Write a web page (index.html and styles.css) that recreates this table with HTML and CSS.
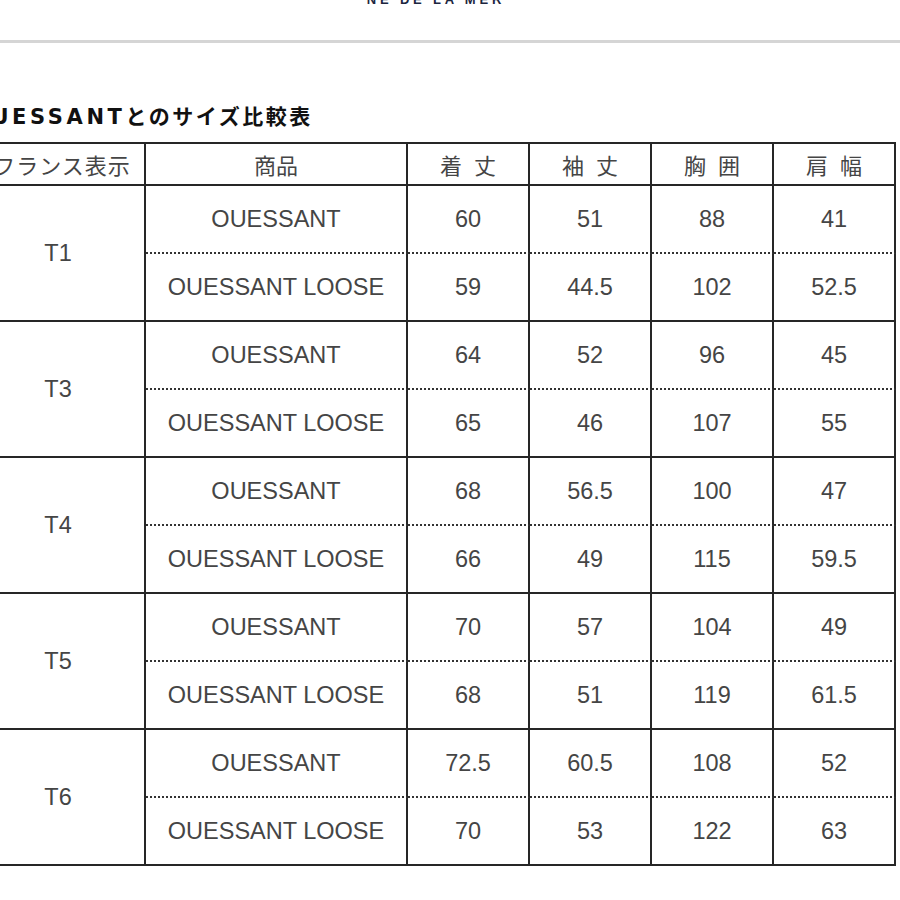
FILE: index.html
```html
<!DOCTYPE html>
<html lang="ja">
<head>
<meta charset="utf-8">
<title>OUESSANTとのサイズ比較表</title>
<link rel="stylesheet" href="styles.css">
</head>
<body>
<header class="site-header">
  <div class="brand">NÉ DE LA MER</div>
</header>
<div class="rule"></div>
<main class="content">
  <h2 class="title"><span class="title-latin">OUESSANT</span>とのサイズ比較表</h2>
  <table class="size-table">
    <colgroup>
      <col class="c-size">
      <col class="c-name">
      <col class="c-num">
      <col class="c-num">
      <col class="c-num">
      <col class="c-num">
    </colgroup>
    <thead>
      <tr class="head-row">
        <th class="th-size">フランス表示</th>
        <th>商品</th>
        <th>着 丈</th>
        <th>袖 丈</th>
        <th>胸 囲</th>
        <th>肩 幅</th>
      </tr>
    </thead>
    <tbody>
      <tr class="sub-first">
        <td class="size" rowspan="2">T1</td>
        <td>OUESSANT</td><td>60</td><td>51</td><td>88</td><td>41</td>
      </tr>
      <tr class="sub-second">
        <td>OUESSANT LOOSE</td><td>59</td><td>44.5</td><td>102</td><td>52.5</td>
      </tr>
      <tr class="sub-first">
        <td class="size" rowspan="2">T3</td>
        <td>OUESSANT</td><td>64</td><td>52</td><td>96</td><td>45</td>
      </tr>
      <tr class="sub-second">
        <td>OUESSANT LOOSE</td><td>65</td><td>46</td><td>107</td><td>55</td>
      </tr>
      <tr class="sub-first">
        <td class="size" rowspan="2">T4</td>
        <td>OUESSANT</td><td>68</td><td>56.5</td><td>100</td><td>47</td>
      </tr>
      <tr class="sub-second">
        <td>OUESSANT LOOSE</td><td>66</td><td>49</td><td>115</td><td>59.5</td>
      </tr>
      <tr class="sub-first">
        <td class="size" rowspan="2">T5</td>
        <td>OUESSANT</td><td>70</td><td>57</td><td>104</td><td>49</td>
      </tr>
      <tr class="sub-second">
        <td>OUESSANT LOOSE</td><td>68</td><td>51</td><td>119</td><td>61.5</td>
      </tr>
      <tr class="sub-first">
        <td class="size" rowspan="2">T6</td>
        <td>OUESSANT</td><td>72.5</td><td>60.5</td><td>108</td><td>52</td>
      </tr>
      <tr class="sub-second">
        <td>OUESSANT LOOSE</td><td>70</td><td>53</td><td>122</td><td>63</td>
      </tr>
    </tbody>
  </table>
</main>
</body>
</html>
```

FILE: styles.css
```css
html, body {
  margin: 0;
  padding: 0;
  background: #ffffff;
}

.site-header {
  display: flow-root;
  height: 40px;
}

.brand {
  margin-top: -7px;
  padding-right: 28px;
  text-align: center;
  font-family: "Liberation Sans", Arial, sans-serif;
  font-weight: 700;
  font-size: 13px;
  line-height: 13px;
  letter-spacing: 3.8px;
  color: #1c2640;
}

.rule {
  height: 3px;
  background: #d5d5d5;
}

.content {
  margin-left: -30px;
  padding-top: 62px;
}

.title {
  margin: 0 0 12px 0;
  font-family: "DejaVu Sans", "Noto Sans CJK JP", sans-serif;
  font-weight: 700;
  font-size: 21px;
  line-height: 25px;
  letter-spacing: 2.5px;
  color: #111111;
}

.title-latin {
  letter-spacing: 3.6px;
}

.size-table {
  border-collapse: separate;
  border-spacing: 0;
  table-layout: fixed;
  width: 925px;
  border-top: 2px solid #262626;
  border-left: 2px solid #262626;
}

.c-size { width: 174px; }
.c-name { width: 262px; }
.c-num { width: 122px; }

.size-table th,
.size-table td {
  padding: 0;
  text-align: center;
  vertical-align: middle;
  border-right: 2px solid #262626;
  border-bottom: 2px solid #262626;
  color: #454545;
}

.size-table th {
  font-family: "Noto Sans CJK JP", sans-serif;
  font-weight: 400;
  font-size: 22px;
  word-spacing: 7px;
}

.size-table th.th-size {
  letter-spacing: 1px;
  padding-left: 8px;
}

.head-row {
  height: 42px;
}

.size-table td {
  font-family: "Liberation Sans", Arial, sans-serif;
  font-size: 23.5px;
}

.sub-first,
.sub-second {
  height: 68px;
}

.sub-first td {
  border-bottom: 2px dotted #333333;
}

.sub-first td.size {
  border-bottom: 2px solid #262626;
}
```
